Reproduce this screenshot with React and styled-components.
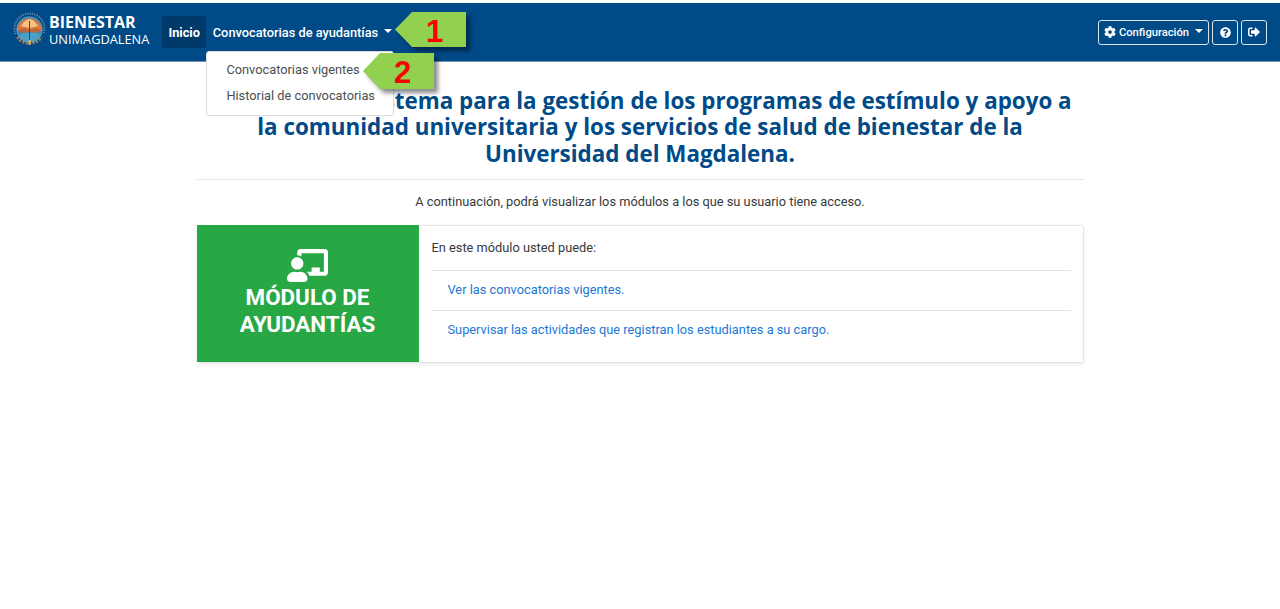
import React from 'react';
import styled, { createGlobalStyle } from 'styled-components';
import { FaCog, FaQuestionCircle, FaSignOutAlt, FaChalkboardTeacher } from 'react-icons/fa';

const GlobalStyle = createGlobalStyle`
  * { box-sizing: border-box; }
  body {
    margin: 0;
    background: #fff;
    color: #373a3c;
    font: 400 12.8px/20px Roboto, sans-serif;
  }
`;

const Page = styled.div`
  min-height: 609px;
  padding-top: 3px;
`;

const Navbar = styled.header`
  display: flex;
  align-items: center;
  height: 59px;
  padding: 0 13px 0 12px;
  background: #004a87;
  border-bottom: 1px solid #6f94b8;
`;

const Brand = styled.a`
  display: flex;
  align-items: center;
  width: 150px;
  gap: 2px;
  color: #fff;
  margin-top: -4px;
`;

const Crest = styled.svg`
  width: 35px;
  height: 36px;
  flex: none;
`;

const BrandText = styled.div`
  font: 400 12.8px/17px 'Open Sans', sans-serif;
  padding-top: 2px;
`;

const BrandName = styled.div`
  font-size: 16px;
  font-weight: 700;
`;

const NavLink = styled.a`
  position: relative;
  display: flex;
  align-items: center;
  height: 32px;
  padding: 1px 6.4px 0;
  color: #fff;
  font-weight: ${(p) => (p.$active ? 700 : 500)};
  background: ${(p) => (p.$active ? '#003a6a' : 'transparent')};
  white-space: nowrap;
`;

const Caret = styled.span`
  margin-left: 6px;
  margin-top: -3px;
  border: 4px solid transparent;
  border-top-color: #fff;
  border-bottom: 0;
`;

const Actions = styled.div`
  display: flex;
  gap: 3px;
  margin-left: auto;
`;

const OutlineButton = styled.button`
  display: flex;
  align-items: center;
  justify-content: center;
  width: ${(p) => p.$width}px;
  height: 25px;
  padding: 0;
  border: 1px solid #dbe5ee;
  border-radius: 3px;
  background: transparent;
  color: #fff;
  font: 500 11.2px/16px Roboto, sans-serif;
  svg { flex: none; }
`;

const ButtonLabel = styled.span`
  margin-left: 3px;
  padding-top: 1px;
`;

const Menu = styled.div`
  position: absolute;
  z-index: 2;
  left: 0;
  top: 35px;
  width: 188px;
  height: 65px;
  padding: 5px 0;
  background: #fff;
  border: 1px solid #d9dadb;
  border-radius: 3px;
`;

const MenuItem = styled.div`
  height: 26px;
  padding-left: 19px;
  line-height: 26px;
  color: #4b4e50;
  font-weight: 400;
`;

const Callout = styled.div`
  position: absolute;
  z-index: 3;
  left: ${(p) => p.$left}px;
  top: ${(p) => p.$top}px;
  width: 71px;
  height: ${(p) => p.$height}px;
  filter: drop-shadow(4px 4px 2px rgba(0, 0, 0, 0.45));
`;

const CalloutShape = styled.div`
  display: flex;
  align-items: center;
  justify-content: center;
  height: 100%;
  padding: 2px 0 0 8px;
  background: #92d050;
  clip-path: polygon(0 50%, 17px 0, 100% 0, 100% 100%, 17px 100%);
  color: #f00;
  font: 700 31.5px/34px 'Liberation Sans', sans-serif;
`;

const Main = styled.main`
  width: 887px;
  margin: 0 auto;
  padding-top: 26px;
`;

const Title = styled.h1`
  margin: 0;
  color: #004a87;
  font: 700 22.4px/26.4px 'Open Sans', sans-serif;
  text-align: center;
  white-space: nowrap;
`;

const Divider = styled.hr`
  margin: 12px 0 0;
  border: 0;
  border-top: 1px solid #e5e5e5;
`;

const Intro = styled.p`
  margin: 12px 0 13px;
  text-align: center;
`;

const Card = styled.section`
  display: flex;
  height: 138px;
  border: 1px solid #e3e4e5;
  border-radius: 3px;
  box-shadow: 0 2px 4px rgba(0, 0, 0, 0.08);
`;

const ModulePanel = styled.div`
  display: flex;
  flex-direction: column;
  align-items: center;
  width: 222px;
  margin: -1px 0 0 -1px;
  padding-top: 20px;
  background: #28a745;
  color: #fff;
`;

const ModuleName = styled.h2`
  margin: -2px 0 0;
  font: 700 22.4px/26.4px Roboto, sans-serif;
  text-align: center;
`;

const CardBody = styled.div`
  flex: 1;
  padding: 12px 12px 0 13px;
`;

const Lead = styled.p`
  margin: 0 0 12px;
`;

const ModuleLink = styled.a`
  display: block;
  height: 39.3px;
  padding: 9px 16px 0;
  border-top: 1px solid #e2e3e4;
  color: #1c78d5;
`;

function UniversityCrest() {
  return (
    <Crest viewBox="0 0 35 36">
      <path d="M3.500 22a15 15 0 1 1 28 0" fill="none" stroke="#9bb0bd" strokeWidth="2" strokeDasharray="1.3 1.1" opacity=".6" />
      <path d="M5.500 25a13 10 0 0 0 24 0" fill="none" stroke="#c98a43" strokeWidth="3" strokeDasharray="2 1.4" opacity=".85" />
      <circle cx="17.5" cy="17.5" r="12.8" fill="#398dba" stroke="#9fbccb" strokeWidth=".5" />
      <path d="M5 19a12.500 12.500 0 0 1 25 0l-5-1-7.500 2-7.500-2Z" fill="#dd783d" />
      <path d="M9 14q4-6 8.500-7 4.500 1 8.500 7l-8.500 2Z" fill="#f6c486" />
      <path d="m6 18 6-2 5.500 2 5.500-2 6 2-3 3-8.500-1-8.500 1Z" fill="#b8673f" />
      <path d="M7 23q5-3 10.500-2 5.500-1 10.500 2-3 6-10.500 6.500Q10 29 7 23Z" fill="#4ba0c7" />
      <path d="M17.500 9v20" fill="none" stroke="#284e60" strokeWidth="1" />
      <path d="M17.500 28v5" stroke="#e4b45b" strokeWidth="2" />
    </Crest>
  );
}

export default function App() {
  return (
    <>
      <GlobalStyle />
      <Page>
        <Navbar>
          <Brand>
            <UniversityCrest />
            <BrandText>
              <BrandName>BIENESTAR</BrandName>
              UNIMAGDALENA
            </BrandText>
          </Brand>
          <NavLink $active>Inicio</NavLink>
          <NavLink>
            Convocatorias de ayudantías
            <Caret />
            <Menu>
              <MenuItem>Convocatorias vigentes</MenuItem>
              <MenuItem>Historial de convocatorias</MenuItem>
            </Menu>
          </NavLink>
          <Actions>
            <OutlineButton $width={111}>
              <FaCog size={12} />
              <ButtonLabel>Configuración</ButtonLabel>
              <Caret />
            </OutlineButton>
            <OutlineButton $width={26}><FaQuestionCircle size={11} /></OutlineButton>
            <OutlineButton $width={26}><FaSignOutAlt size={12} /></OutlineButton>
          </Actions>
        </Navbar>
        <Main>
          <Title>
            Bienvenido al sistema para la gestión de los programas de estímulo y apoyo a<br />
            la comunidad universitaria y los servicios de salud de bienestar de la<br />
            Universidad del Magdalena.
          </Title>
          <Divider />
          <Intro>A continuación, podrá visualizar los módulos a los que su usuario tiene acceso.</Intro>
          <Card>
            <ModulePanel>
              <FaChalkboardTeacher size={41} />
              <ModuleName>MÓDULO DE<br />AYUDANTÍAS</ModuleName>
            </ModulePanel>
            <CardBody>
              <Lead>En este módulo usted puede:</Lead>
              <ModuleLink>Ver las convocatorias vigentes.</ModuleLink>
              <ModuleLink>Supervisar las actividades que registran los estudiantes a su cargo.</ModuleLink>
            </CardBody>
          </Card>
        </Main>
        <Callout $left={395} $top={12} $height={35}><CalloutShape>1</CalloutShape></Callout>
        <Callout $left={363} $top={53} $height={36}><CalloutShape>2</CalloutShape></Callout>
      </Page>
    </>
  );
}
